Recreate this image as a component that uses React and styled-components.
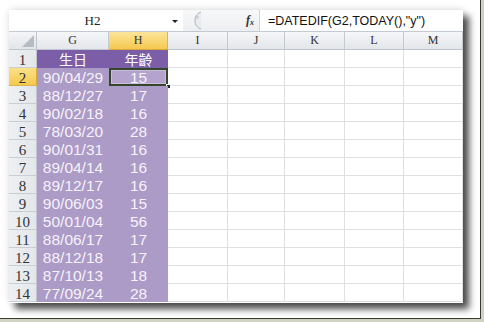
import styled, { createGlobalStyle } from 'styled-components';

const GlobalStyle = createGlobalStyle`
  html, body {
    margin: 0;
    padding: 0;
    background: #d2d2c3;
  }
`;

const columns = ['G', 'H', 'I', 'J', 'K', 'L', 'M'];
const colWidths = '28px 72px 59px 60px 57px 60px 59px 59px';

const rows = [
  ['90/04/29', '15'],
  ['88/12/27', '17'],
  ['90/02/18', '16'],
  ['78/03/20', '28'],
  ['90/01/31', '16'],
  ['89/04/14', '16'],
  ['89/12/17', '16'],
  ['90/06/03', '15'],
  ['50/01/04', '56'],
  ['88/06/17', '17'],
  ['88/12/18', '17'],
  ['87/10/13', '18'],
  ['77/09/24', '28'],
];

const App = () => {
  return (
    <>
      <GlobalStyle />
      <Paper>
        <Window>
          <FormulaBar>
            <NameBox>
              <NameText>H2</NameText>
              <DropArrow />
            </NameBox>
            <Splitter>
              <svg width="16" height="19" viewBox="0 0 16 19">
                <path
                  d="M14 1 A9 9 0 0 0 14 18"
                  fill="#e9ebee"
                  stroke="#aeb4bc"
                  strokeWidth="1"
                />
                <circle cx="10" cy="6" r="1.6" fill="#c4c9cf" />
              </svg>
              <Fx>
                f<sub>x</sub>
              </Fx>
            </Splitter>
            <FormulaInput>=DATEDIF(G2,TODAY(),"y")</FormulaInput>
          </FormulaBar>
          <Sheet>
            <Corner>
              <svg width="12" height="12" viewBox="0 0 12 12">
                <polygon points="12,0 12,12 0,12" fill="#b7bcc4" />
              </svg>
            </Corner>
            {columns.map((c) => (
              <ColHeader key={c} $active={c === 'H'}>
                {c}
              </ColHeader>
            ))}

            <RowHeader>1</RowHeader>
            <TitleCell>生日</TitleCell>
            <TitleCell>年齡</TitleCell>
            {columns.slice(2).map((c) => (
              <Cell key={c} />
            ))}

            {rows.map((row, i) => (
              <Row key={i} num={i + 2} row={row} />
            ))}
          </Sheet>
        </Window>
      </Paper>
    </>
  );
};

const Row = ({ num, row }) => (
  <>
    <RowHeader $active={num === 2}>{num}</RowHeader>
    <DataCell>{row[0]}</DataCell>
    <DataCell $selected={num === 2}>{row[1]}</DataCell>
    {columns.slice(2).map((c) => (
      <Cell key={c} />
    ))}
  </>
);

export default App;

const Paper = styled.div`
  box-sizing: border-box;
  width: 481px;
  height: 319px;
  background: #ffffff;
  border-right: 1px solid #3a3a36;
  border-bottom: 1px solid #3a3a36;
  padding: 10px 0 0 9px;
`;

const Window = styled.div`
  width: 454px;
  height: 293px;
  background: #ffffff;
  display: flex;
  flex-direction: column;
  overflow: hidden;
  box-shadow: 6px 6px 7px rgba(0, 0, 0, 0.7), 0 -1px 7px rgba(0, 0, 0, 0.12);
`;

const FormulaBar = styled.div`
  height: 21px;
  display: flex;
  border-bottom: 1px solid #c3c9d1;
  background: #ffffff;
`;

const NameBox = styled.div`
  width: 174px;
  display: flex;
  align-items: center;
`;

const NameText = styled.div`
  flex: 1;
  text-align: center;
  font-family: 'Liberation Serif', serif;
  font-size: 13px;
  color: #222;
  padding-left: 4px;
`;

const DropArrow = styled.div`
  width: 0;
  height: 0;
  border-left: 3px solid transparent;
  border-right: 3px solid transparent;
  border-top: 3px solid #222;
  margin-right: 5px;
  margin-top: 1px;
`;

const Splitter = styled.div`
  width: 77px;
  display: flex;
  align-items: center;
  justify-content: space-between;
  background: linear-gradient(#f7f8f9, #eceef1);
  padding: 0 5px 0 4px;
  box-sizing: border-box;
  border-right: 1px solid #d0d4da;
`;

const Fx = styled.div`
  font-family: 'Liberation Serif', serif;
  font-style: italic;
  font-weight: bold;
  font-size: 12px;
  color: #333;
  sub {
    font-size: 8px;
    vertical-align: -1px;
  }
`;

const FormulaInput = styled.div`
  flex: 1;
  display: flex;
  align-items: center;
  padding-left: 8px;
  font-family: 'Liberation Sans', sans-serif;
  font-size: 12.5px;
  color: #111;
`;

const Sheet = styled.div`
  flex: 1;
  display: grid;
  grid-template-columns: ${colWidths};
  grid-auto-rows: 18px;
`;

const BaseCell = styled.div`
  box-sizing: border-box;
  display: flex;
  align-items: center;
  justify-content: center;
`;

const Corner = styled(BaseCell)`
  background: linear-gradient(#f4f5f7, #e2e5e9);
  border-right: 1px solid #bfc5cd;
  border-bottom: 1px solid #bfc5cd;
  justify-content: flex-end;
  align-items: flex-end;
  padding: 0 2px 2px 0;
`;

const ColHeader = styled(BaseCell)`
  background: ${(p) =>
    p.$active
      ? 'linear-gradient(#fbe49a, #f5c94f)'
      : 'linear-gradient(#f5f6f8, #e3e6ea)'};
  border-right: 1px solid ${(p) => (p.$active ? '#e0b448' : '#c5cad1')};
  border-bottom: 1px solid ${(p) => (p.$active ? '#d9a93a' : '#bfc5cd')};
  font-family: 'Liberation Serif', serif;
  font-size: 12px;
  color: #333;
`;

const RowHeader = styled(BaseCell)`
  background: ${(p) =>
    p.$active
      ? 'linear-gradient(#fbe08a, #f5c94f)'
      : 'linear-gradient(90deg, #eef0f3, #e3e6ea)'};
  border-right: 1px solid ${(p) => (p.$active ? '#d9a93a' : '#bfc5cd')};
  border-bottom: 1px solid ${(p) => (p.$active ? '#e0b448' : '#c9ced5')};
  font-family: 'Liberation Serif', serif;
  font-size: 15px;
  color: #333;
  padding-top: 3px;
`;

const Cell = styled(BaseCell)`
  border-right: 1px solid #dddfe1;
  border-bottom: 1px solid #dddfe1;
`;

const TitleCell = styled(BaseCell)`
  background: #7c5da7;
  font-family: 'Noto Sans CJK TC', sans-serif;
  font-size: 14px;
  color: #ffffff;
`;

const DataCell = styled(BaseCell)`
  position: relative;
  background: ${(p) => (p.$selected ? '#b3a3cd' : '#ac9ac7')};
  font-family: 'Liberation Sans', sans-serif;
  font-size: 15.5px;
  color: #f6f3fa;
  padding-top: 1px;
  box-shadow: ${(p) =>
    p.$selected ? 'inset 0 0 0 2px #34472a, inset 0 0 0 3px #c9bddc' : 'none'};

  ${(p) =>
    p.$selected &&
    `
    &::after {
      content: '';
      position: absolute;
      right: -3px;
      bottom: -3px;
      width: 5px;
      height: 5px;
      background: #1e2a18;
      border: 1px solid #ffffff;
      box-sizing: border-box;
    }
  `}
`;
